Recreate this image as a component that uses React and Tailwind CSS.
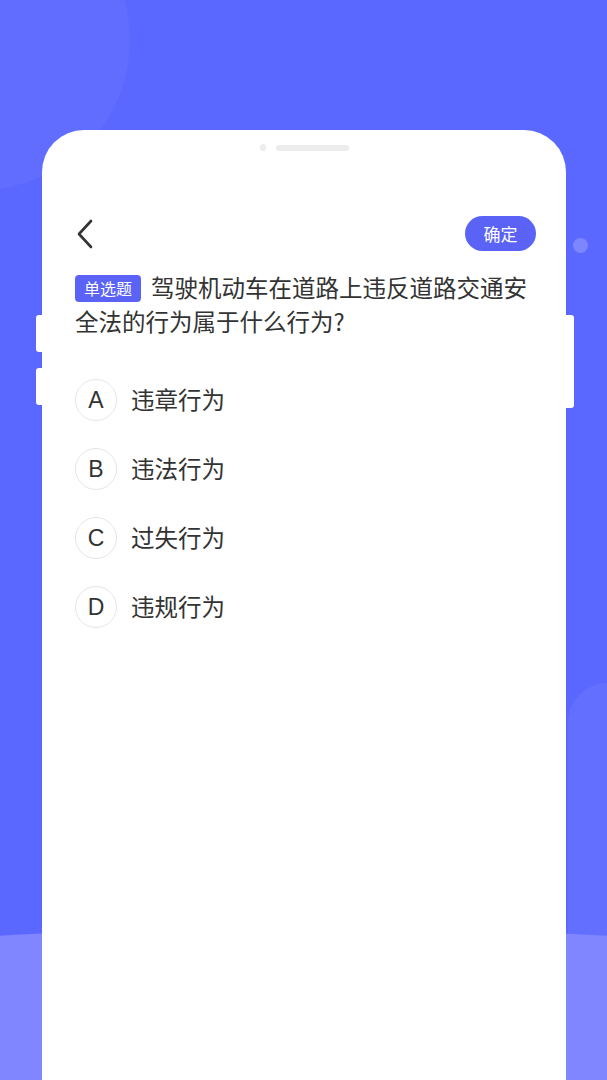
import React from 'react';

const options = [
  { key: 'A', text: '违章行为' },
  { key: 'B', text: '违法行为' },
  { key: 'C', text: '过失行为' },
  { key: 'D', text: '违规行为' },
];

export default function App() {
  return (
    <div
      className="relative w-full h-[1080px] overflow-hidden bg-[#5b68ff]"
      style={{ fontFamily: '"Noto Sans CJK SC", "Noto Sans", sans-serif' }}
    >
      {/* background decorations */}
      <div className="absolute -left-[170px] -top-[110px] w-[300px] h-[300px] rounded-full bg-white/[0.04]" />
      <div className="absolute left-[573px] top-[238px] w-[15px] h-[15px] rounded-full bg-white/20" />
      <div className="absolute left-[568px] top-[683px] w-[200px] h-[400px] rounded-tl-[40px] bg-white/[0.05]" />
      <div className="absolute -left-[597px] top-[927px] w-[1800px] h-[300px] rounded-[50%] bg-[#7f86ff]" />

      {/* phone */}
      <div className="relative ml-[42px] mt-[130px] w-[524px] h-[1000px] bg-white rounded-t-[42px]">
        <div className="absolute -left-[6px] top-[185px] w-[8px] h-[37px] rounded-l-[3px] bg-white" />
        <div className="absolute -left-[6px] top-[238px] w-[8px] h-[37px] rounded-l-[3px] bg-white" />
        <div className="absolute -right-[8px] top-[185px] w-[10px] h-[93px] rounded-r-[3px] bg-white" />

        <div className="flex justify-center items-center gap-[10px] pt-[14px]">
          <div className="w-[6px] h-[7px] rounded-full bg-[#ececec]" />
          <div className="w-[73px] h-[6px] rounded-full bg-[#ececec]" />
        </div>

        <div className="flex items-center justify-between pl-[33px] pr-[30px] mt-[65px]">
          <svg width="20" height="30" viewBox="0 0 20 30" fill="none">
            <path d="M16 2 L4 15 L16 28" stroke="#333" strokeWidth="2.6" strokeLinecap="round" strokeLinejoin="round" />
          </svg>
          <button className="w-[71px] h-[35px] rounded-full bg-[#5b63f7] text-white text-[17px] leading-none">
            确定
          </button>
        </div>

        <div className="pl-[33px] pr-[30px] mt-[19px] text-[23.5px] leading-[34px] text-[#333]">
          <span className="inline-block align-[2px] mr-[10px] px-[9px] h-[27px] leading-[27px] rounded-[4px] bg-[#5b63f7] text-white text-[16px]">
            单选题
          </span>
          驾驶机动车在道路上违反道路交通安全法的行为属于什么行为?
        </div>

        <div className="flex flex-col gap-[27px] pl-[33px] mt-[41px]">
          {options.map((o) => (
            <div key={o.key} className="flex items-center">
              <div
                className="w-[42px] h-[42px] rounded-full border-[1.5px] border-[#e6e6e6] flex items-center justify-center text-[23px] text-[#333]"
                style={{ fontFamily: '"Liberation Sans", Arial, sans-serif' }}
              >
                {o.key}
              </div>
              <span className="ml-[14px] text-[23.5px] text-[#333]">{o.text}</span>
            </div>
          ))}
        </div>
      </div>
    </div>
  );
}
